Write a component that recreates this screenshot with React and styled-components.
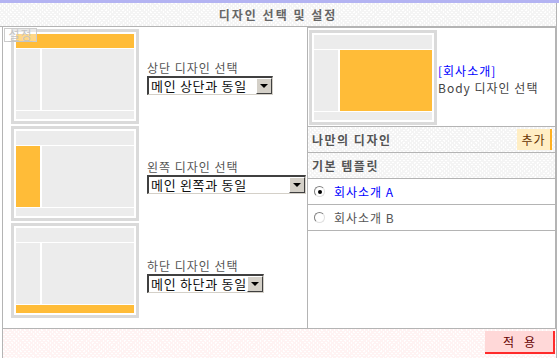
import React from "react";
import styled, { createGlobalStyle } from "styled-components";

const Global = createGlobalStyle`
  html, body { margin: 0; padding: 0; background: #fff; }
  body { font-family: "Noto Sans CJK KR", "Noto Sans", sans-serif; font-size: 12px; color: #444; letter-spacing: 1px; }
  * { box-sizing: border-box; }
`;

const checker = (c) => `
  background-color: #fff;
  background-image:
    repeating-linear-gradient(45deg, ${c} 0 1.5px, transparent 1.5px 3px),
    repeating-linear-gradient(-45deg, ${c} 0 1.5px, transparent 1.5px 3px);
`;

const Frame = styled.div`
  width: 559px;
  height: 358px;
  border-top: 3px solid #b3b3f2;
  display: flex;
  flex-direction: column;
  overflow: hidden;
`;

const Header = styled.div`
  height: 24px;
  margin-right: 2px;
  border-bottom: 1px solid #b4b4b4;
  border-right: 1px solid #b4b4b4;
  ${checker("#f4f4f4")}
  display: flex;
  align-items: center;
  justify-content: center;
  font-weight: bold;
  color: #666;
  letter-spacing: 2px;
  line-height: 1;
`;

const Body = styled.div`
  margin-left: 2px;
  margin-right: 2px;
  border-left: 1px solid #b4b4b4;
  border-right: 1px solid #b4b4b4;
  flex: 1;
  display: flex;
  flex-direction: column;
`;

const Main = styled.div`
  height: 302px;
  display: grid;
  grid-template-columns: 304px 1fr;
  border-bottom: 1px solid #b4b4b4;
`;

const LeftCol = styled.div`
  position: relative;
  padding: 2px 0 0 8px;
  display: grid;
  grid-template-rows: repeat(3, 95px);
  row-gap: 2px;
`;

const DesignRow = styled.div`
  display: flex;
  align-items: center;
  gap: 8px;
`;

const Controls = styled.div`
  display: flex;
  flex-direction: column;
  gap: 1px;
  padding-top: ${(p) => p.$offset || 0}px;
`;

const Label = styled.div`
  color: #555;
  line-height: 14px;
`;

const SelectBox = styled.div`
  width: ${(p) => p.$w}px;
  height: 19px;
  border-top: 2px solid #404040;
  border-left: 2px solid #404040;
  border-right: 1px solid #d4d0c8;
  border-bottom: 1px solid #d4d0c8;
  background: #fff;
  display: flex;
  align-items: center;
  justify-content: space-between;
  padding-left: 2px;
  color: #111;
  font-size: 13px;
  letter-spacing: 0.7px;
  line-height: 1;
  white-space: nowrap;
`;

const SelectBtn = styled.div`
  width: 16px;
  height: 16px;
  flex-shrink: 0;
  background: #d4d0c8;
  border-top: 1px solid #fff;
  border-left: 1px solid #fff;
  border-right: 1px solid #404040;
  border-bottom: 1px solid #404040;
  display: flex;
  align-items: center;
  justify-content: center;
  &::after {
    content: "";
    border-left: 4px solid transparent;
    border-right: 4px solid transparent;
    border-top: 4px solid #000;
  }
`;

const Thumb = styled.div`
  width: 128px;
  height: 95px;
  border: 3px solid #dadada;
  padding: 2px;
  background: #fff;
  display: grid;
  grid-template-rows: 14px 1fr 8px;
  gap: 1px;
  flex-shrink: 0;
`;

const Bar = styled.div`
  background: ${(p) => (p.$on ? "#ffbc38" : "#ececec")};
`;

const Middle = styled.div`
  display: grid;
  grid-template-columns: 24px 1fr;
  gap: 2px;
`;

const Broken = styled.span`
  position: absolute;
  left: 1px;
  top: 1px;
  width: 33px;
  height: 14px;
  border: 1px solid #cccccc;
  color: #c4c4c4;
  font-size: 12px;
  line-height: 12px;
  text-align: center;
  letter-spacing: 1px;
  text-decoration: underline;
  background: rgba(255,255,255,0.4);
`;

const RightCol = styled.div`
  border: 1px solid #b4b4b4;
  border-bottom: none;
  display: flex;
  flex-direction: column;
`;

const BodyRow = styled.div`
  height: 99px;
  border-bottom: 1px solid #b4b4b4;
  display: flex;
  align-items: center;
  padding-left: 1px;
  gap: 1px;
`;

const BodyText = styled.div`
  line-height: 17px;
  padding-top: 4px;
`;

const Blue = styled.div`
  color: #0000ff;
`;

const SectionRow = styled.div`
  height: 26px;
  border-bottom: 1px solid #b4b4b4;
  ${checker("#f4f4f4")}
  display: flex;
  align-items: center;
  justify-content: space-between;
  padding-left: 4px;
  padding-right: 3px;
  font-weight: bold;
  color: #555;
  letter-spacing: 1.5px;
`;

const AddBtn = styled.div`
  width: 35px;
  height: 21px;
  background: #ffeec4;
  border-right: 2px solid #ffb020;
  color: #663300;
  font-weight: normal;
  letter-spacing: 1px;
  display: flex;
  align-items: center;
  justify-content: center;
`;

const RadioRow = styled.div`
  height: 26px;
  border-bottom: 1px solid #b4b4b4;
  display: flex;
  align-items: center;
  padding-left: 6px;
  gap: 9px;
  color: ${(p) => (p.$active ? "#0000ff" : "#555")};
`;

const Radio = styled.span`
  width: 11px;
  height: 11px;
  border-radius: 50%;
  border: 1px solid #808080;
  border-right-color: #e0e0e0;
  border-bottom-color: #e0e0e0;
  background: #fff;
  display: flex;
  align-items: center;
  justify-content: center;
  &::after {
    content: "";
    width: 4px;
    height: 4px;
    border-radius: 50%;
    background: ${(p) => (p.$checked ? "#000" : "transparent")};
  }
`;

const Footer = styled.div`
  flex: 1;
  ${checker("#fff3f3")}
  display: flex;
  justify-content: flex-end;
  align-items: flex-start;
  padding: 2px 1px 0 0;
`;

const ApplyBtn = styled.div`
  width: 70px;
  height: 23px;
  background: #ffd8d8;
  border-right: 2px solid #ff2a2a;
  border-bottom: 2px solid #ff2a2a;
  color: #660000;
  display: flex;
  align-items: center;
  justify-content: center;
  letter-spacing: 10px;
  padding-left: 10px;
`;

function Thumbnail({ part }) {
  return (
    <Thumb>
      <Bar $on={part === "top"} />
      <Middle>
        <Bar $on={part === "left"} />
        <Bar $on={part === "body"} />
      </Middle>
      <Bar $on={part === "bottom"} />
    </Thumb>
  );
}

function FakeSelect({ w, text }) {
  return (
    <SelectBox $w={w}>
      <span>{text}</span>
      <SelectBtn />
    </SelectBox>
  );
}

const rows = [
  { part: "top", label: "상단 디자인 선택", value: "메인 상단과 동일", w: 126, off: 2 },
  { part: "left", label: "왼쪽 디자인 선택", value: "메인 왼쪽과 동일", w: 159, off: 6 },
  { part: "bottom", label: "하단 디자인 선택", value: "메인 하단과 동일", w: 117, off: 10 },
];

export default function App() {
  return (
    <>
      <Global />
      <Frame>
        <Header>디자인 선택 및 설정</Header>
        <Body>
          <Main>
            <LeftCol>
              {rows.map((r) => (
                <DesignRow key={r.part}>
                  <Thumbnail part={r.part} />
                  <Controls $offset={r.off}>
                    <Label>{r.label}</Label>
                    <FakeSelect w={r.w} text={r.value} />
                  </Controls>
                </DesignRow>
              ))}
              <Broken>설정</Broken>
            </LeftCol>
            <RightCol>
              <BodyRow>
                <Thumbnail part="body" />
                <BodyText>
                  <Blue>[회사소개]</Blue>
                  <div>Body 디자인 선택</div>
                </BodyText>
              </BodyRow>
              <SectionRow>
                <span>나만의 디자인</span>
                <AddBtn>추가</AddBtn>
              </SectionRow>
              <SectionRow>
                <span>기본 템플릿</span>
              </SectionRow>
              <RadioRow $active>
                <Radio $checked />
                <span>회사소개 A</span>
              </RadioRow>
              <RadioRow>
                <Radio />
                <span>회사소개 B</span>
              </RadioRow>
            </RightCol>
          </Main>
          <Footer>
            <ApplyBtn>적용</ApplyBtn>
          </Footer>
        </Body>
      </Frame>
    </>
  );
}
